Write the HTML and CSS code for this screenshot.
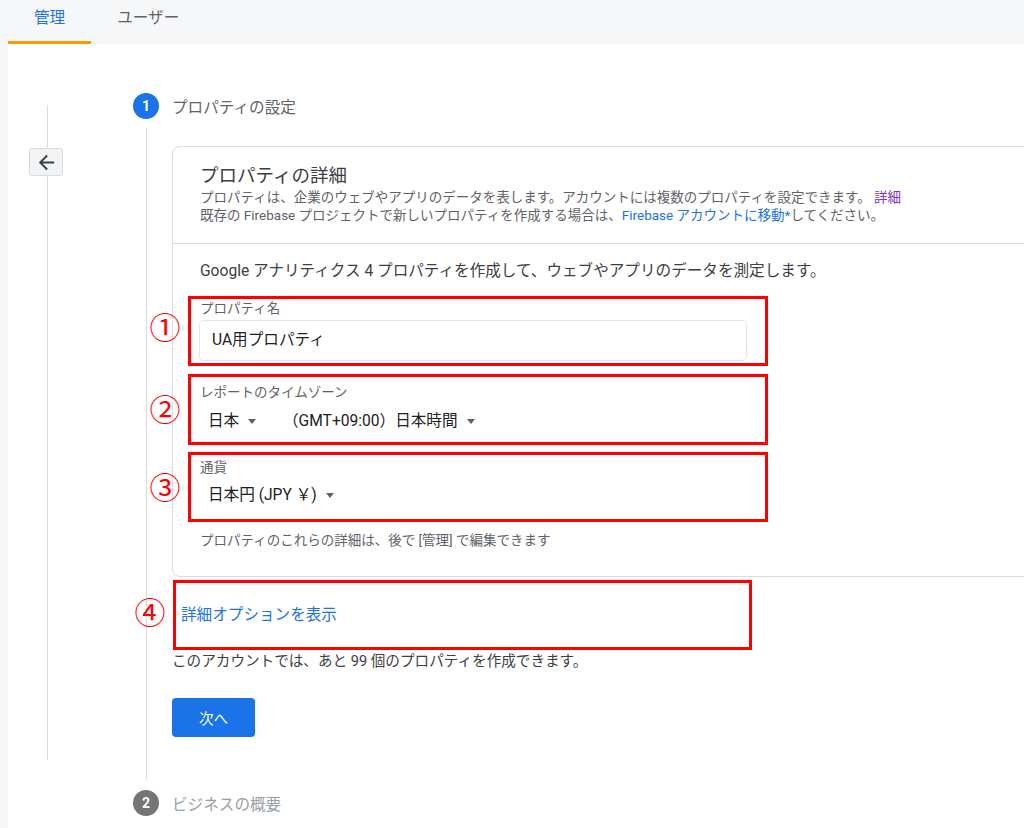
FILE: index.html
```html
<!DOCTYPE html>
<html>
<head>
	<meta charset="UTF-8">
	<title>プロパティの作成</title>
	<link rel="stylesheet" href="styles.css">
</head>
<body>
	<div class="topbar">
		<div class="tab tab-active">管理</div>
		<div class="tab">ユーザー</div>
	</div>

	<div class="panel">
		<div class="rail">
			<button class="back-btn">
				<svg width="23" height="23" viewBox="0 0 24 24"><path d="M20 11H7.83l5.59-5.59L12 4l-8 8 8 8 1.41-1.41L7.83 13H20v-2z" fill="#3c4043"/></svg>
			</button>
		</div>

		<div class="stepper">
			<div class="step-head">
				<span class="step-num">1</span>
				<span class="step-title">プロパティの設定</span>
			</div>

			<div class="step-body">
				<div class="card">
					<div class="card-head">
						<h2 class="card-title">プロパティの詳細</h2>
						<p class="card-desc">プロパティは、企業のウェブやアプリのデータを表します。アカウントには複数のプロパティを設定できます。 <a class="link link-visited">詳細</a><br>既存の Firebase プロジェクトで新しいプロパティを作成する場合は、<a class="link">Firebase アカウントに移動*</a>してください。</p>
					</div>
					<div class="card-body">
						<p class="intro">Google アナリティクス 4 プロパティを作成して、ウェブやアプリのデータを測定します。</p>

						<div class="mark mark-1">
							<span class="mark-num">①</span>
							<div class="field-label">プロパティ名</div>
							<div class="text-input">UA用プロパティ</div>
						</div>

						<div class="mark mark-2">
							<span class="mark-num">②</span>
							<div class="field-label">レポートのタイムゾーン</div>
							<div class="values">
								<span class="select select-country">日本<i class="caret"></i></span>
								<span class="select">（GMT+09:00）日本時間<i class="caret"></i></span>
							</div>
						</div>

						<div class="mark mark-3">
							<span class="mark-num">③</span>
							<div class="field-label">通貨</div>
							<div class="values">
								<span class="select">日本円 (JPY ￥)<i class="caret"></i></span>
							</div>
						</div>

						<p class="hint">プロパティのこれらの詳細は、後で [管理] で編集できます</p>
					</div>
				</div>

				<div class="mark mark-4">
					<span class="mark-num">④</span>
					<a class="link link-big">詳細オプションを表示</a>
				</div>

				<p class="quota">このアカウントでは、あと 99 個のプロパティを作成できます。</p>

				<button class="btn-primary">次へ</button>
			</div>

			<div class="step-head step-head-muted">
				<span class="step-num">2</span>
				<span class="step-title">ビジネスの概要</span>
			</div>
		</div>
	</div>
</body>
</html>
```

FILE: styles.css
```css
*{
	box-sizing: border-box;
}
body{
	margin: 0;
	background: #f6f7f8;
	font-family: Roboto, "Noto Sans CJK JP", sans-serif;
	color: #3c4043;
	overflow: hidden;
}

/* tabs */
.topbar{
	display: flex;
	height: 44px;
	padding-left: 8px;
}
.tab{
	height: 44px;
	padding: 8px 26px 0;
	font-size: 15.6px;
	line-height: 20px;
	color: #5f6368;
}
.tab-active{
	color: #1a73e8;
	border-bottom: 3px solid #ff9900;
}

/* main panel */
.panel{
	display: flex;
	margin-left: 8px;
	height: 784px;
	background: #fff;
	overflow: hidden;
}
.rail{
	flex: none;
	width: 34px;
	height: 655px;
	margin: 61px 0 0 21px;
	background: linear-gradient(#dadce0, #dadce0) 18px 0 / 1px 100% no-repeat;
}
.back-btn{
	display: flex;
	align-items: center;
	justify-content: center;
	width: 34px;
	height: 28px;
	margin-top: 43px;
	padding: 0;
	border: 1px solid #dadce0;
	border-radius: 3px;
	background: #f1f3f4;
}

/* stepper */
.stepper{
	flex: none;
	width: 960px;
	margin-left: 70px;
	padding-top: 49px;
}
.step-head{
	display: flex;
	align-items: center;
	gap: 13px;
	height: 26px;
}
.step-num{
	display: flex;
	align-items: center;
	justify-content: center;
	width: 26px;
	height: 26px;
	border-radius: 50%;
	background: #1a73e8;
	color: #fff;
	font-size: 14px;
	font-weight: bold;
}
.step-title{
	font-size: 15.6px;
	color: #5f6368;
}
.step-head-muted{
	margin-top: 10px;
}
.step-head-muted .step-num{
	background: #757575;
}
.step-head-muted .step-title{
	color: #9aa0a6;
}
.step-body{
	margin: 9px 0 0 13px;
	padding: 18px 0 43px 25px;
	border-left: 1px solid #dadce0;
}

/* card */
.card{
	width: 900px;
	border: 1px solid #dadce0;
	border-radius: 8px;
}
.card-head{
	padding: 17px 27px 19px;
	border-bottom: 1px solid #dadce0;
}
.card-title{
	margin: 0;
	font-size: 18.5px;
	font-weight: normal;
	line-height: 24px;
	color: #3c4043;
}
.card-desc{
	margin: 0;
	font-size: 13.5px;
	line-height: 18px;
	color: #5f6368;
}
.link{
	color: #1a73e8;
	text-decoration: none;
}
.link-visited{
	color: #8430ce;
}
.link-big{
	font-size: 15.6px;
}
.card-body{
	padding: 16px 27px 27px;
}
.intro{
	margin: 0 0 14px;
	font-size: 15.6px;
	line-height: 22px;
	color: #3c4043;
}

/* red annotation boxes */
.mark{
	position: relative;
	width: 580px;
	margin-left: -12px;
	padding-left: 9px;
	border: 3px solid #f00;
}
.mark-num{
	position: absolute;
	left: -42px;
	top: 15px;
	width: 32px;
	text-align: center;
	font-size: 31px;
	line-height: 32px;
	color: #f00;
}
.mark-1{
	padding-top: 1px;
	padding-bottom: 2px;
}
.mark-1 .mark-num{
	top: 14px;
}
.mark-2{
	margin-top: 8px;
	padding-top: 7px;
	padding-bottom: 11px;
}
.mark-3{
	margin-top: 7px;
	padding-top: 4px;
	padding-bottom: 14px;
}
.mark-3 .mark-num,
.mark-2 .mark-num{
	top: 18px;
}
.mark-4{
	display: flex;
	align-items: center;
	width: 579px;
	height: 70px;
	margin: 3px 0 0 1px;
	padding: 0 0 4px 5px;
}

/* fields */
.field-label{
	font-size: 13.5px;
	line-height: 16px;
	color: #5f6368;
}
.text-input{
	width: 548px;
	height: 41px;
	margin: 4px 0 0 -1px;
	padding-left: 12px;
	border: 1px solid #e3e5e8;
	border-radius: 4px;
	font-size: 15.6px;
	line-height: 39px;
	color: #202124;
}
.values{
	display: flex;
	margin: 11px 0 0 8px;
	font-size: 15.6px;
	line-height: 20px;
	color: #202124;
}
.mark-3 .values{
	margin-top: 10px;
}
.select{
	display: inline-flex;
	align-items: center;
	gap: 9px;
}
.select-country{
	width: 75px;
}
.caret{
	width: 0;
	height: 0;
	border-left: 4px solid transparent;
	border-right: 4px solid transparent;
	border-top: 5px solid #5f6368;
}
.hint{
	margin: 9px 0 0;
	font-size: 13.5px;
	line-height: 18px;
	color: #5f6368;
}
.quota{
	margin: 1px 0 0;
	font-size: 14.6px;
	line-height: 20px;
	color: #3c4043;
}
.btn-primary{
	display: block;
	width: 83px;
	height: 39px;
	margin-top: 27px;
	border: none;
	border-radius: 4px;
	background: #1a73e8;
	color: #fff;
	font-family: inherit;
	font-size: 14.6px;
}
```
